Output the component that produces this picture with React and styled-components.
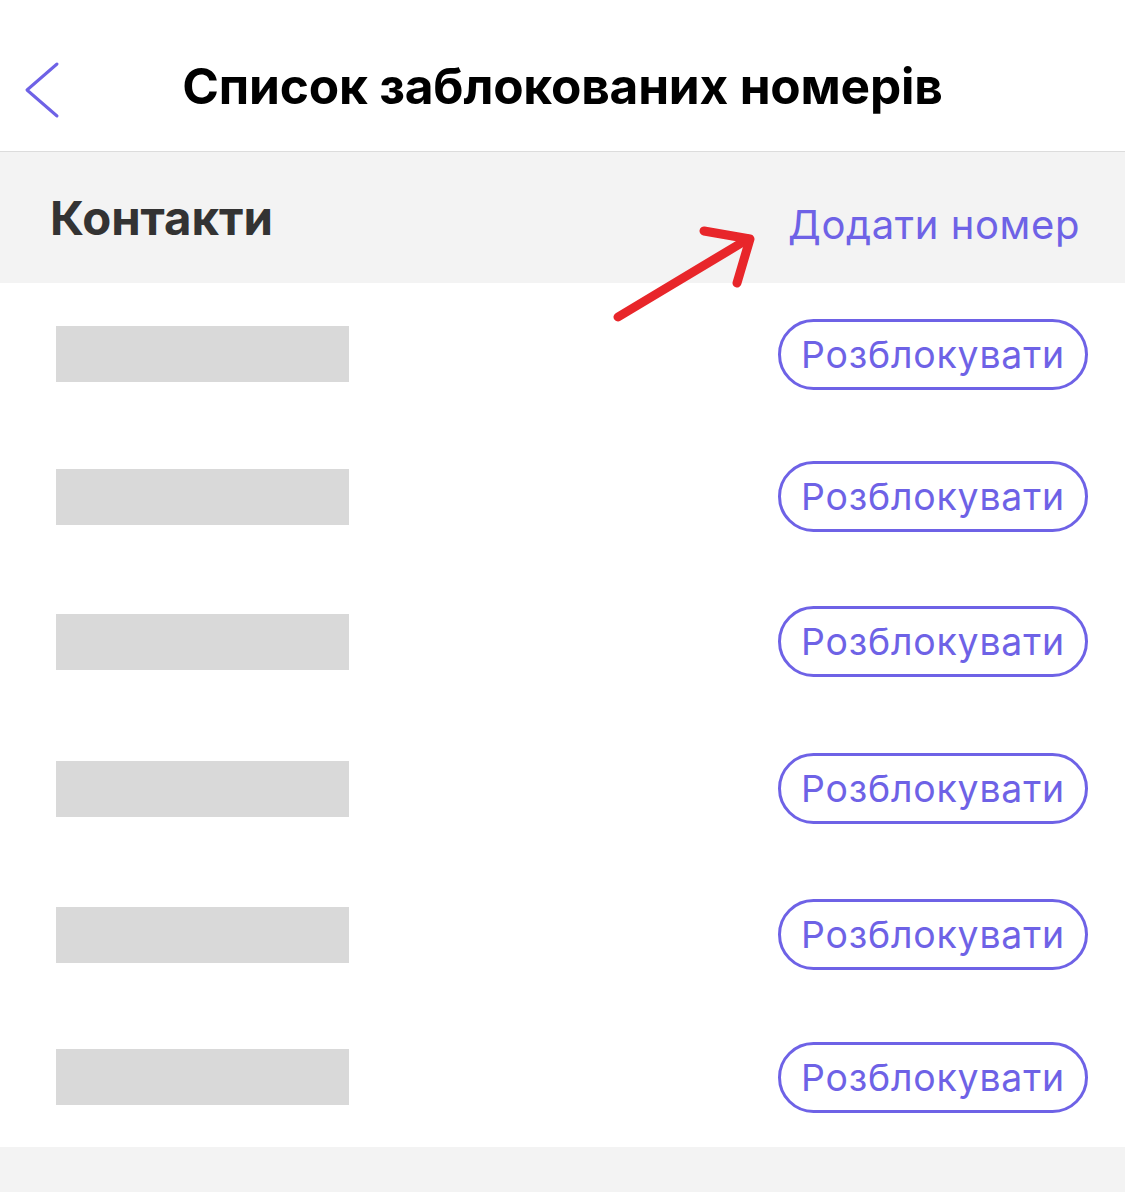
import React from 'react'
import styled, { createGlobalStyle } from 'styled-components'

const GlobalStyle = createGlobalStyle`
  html, body {
    margin: 0;
    padding: 0;
    background: #ffffff;
  }
  body {
    font-family: Inter, "Noto Sans", sans-serif;
    -webkit-font-smoothing: antialiased;
  }
`

const PURPLE = '#6e62e6'

const Page = styled.div`
  position: relative;
  width: 1125px;
  min-height: 1192px;
  background: #f3f3f3;
  overflow: hidden;
`

const TopBar = styled.header`
  height: 151px;
  background: #ffffff;
  border-bottom: 1px solid #dcdcdc;
  display: flex;
  align-items: center;
  justify-content: center;
  position: relative;
`

const BackButton = styled.button`
  position: absolute;
  left: 22px;
  top: 60px;
  width: 40px;
  height: 60px;
  padding: 0;
  border: none;
  background: transparent;
  cursor: pointer;
`

const Title = styled.h1`
  margin: 20px 0 0;
  font-size: 49.6px;
  font-weight: 700;
  color: #000000;
  letter-spacing: -0.2px;
`

const SectionHead = styled.div`
  height: 131px;
  display: flex;
  align-items: flex-start;
  justify-content: space-between;
  padding: 0 45px 0 50px;
  background: #f3f3f3;
`

const SectionTitle = styled.h2`
  margin: 37px 0 0;
  font-size: 47.3px;
  font-weight: 700;
  color: #333333;
`

const AddLink = styled.a`
  margin-top: 48px;
  font-size: 40px;
  font-weight: 400;
  color: ${PURPLE};
  text-decoration: none;
  letter-spacing: 0.6px;
`

const List = styled.ul`
  margin: 0;
  padding: 0;
  list-style: none;
  background: #ffffff;
`

const Row = styled.li`
  height: ${p => p.$h}px;
  display: flex;
  align-items: center;
  justify-content: space-between;
  padding: 0 37px 0 56px;
`

const Placeholder = styled.div`
  width: 293px;
  height: 56px;
  background: #d9d9d9;
`

const UnblockButton = styled.button`
  width: 310px;
  height: 71px;
  box-sizing: border-box;
  border: 3px solid ${PURPLE};
  border-radius: 36px;
  background: #ffffff;
  color: ${PURPLE};
  font-family: inherit;
  font-size: 37.4px;
  font-weight: 400;
  letter-spacing: 0.8px;
  padding: 0;
  cursor: pointer;
`

const Arrow = styled.svg`
  position: absolute;
  left: 610px;
  top: 225px;
  pointer-events: none;
`

const rows = [142, 143, 147, 147, 145, 140]

export default function App() {
  return (
    <Page>
      <GlobalStyle />
      <TopBar>
        <BackButton aria-label="Назад">
          <svg width="40" height="60" viewBox="0 0 40 60">
            <polyline points="35,4 5,30 35,56" fill="none" stroke={PURPLE} strokeWidth="3" strokeLinecap="round" strokeLinejoin="round" />
          </svg>
        </BackButton>
        <Title>Список заблокованих номерів</Title>
      </TopBar>
      <SectionHead>
        <SectionTitle>Контакти</SectionTitle>
        <AddLink href="#">Додати номер</AddLink>
      </SectionHead>
      <List>
        {rows.map((h, i) => (
          <Row key={i} $h={h}>
            <Placeholder />
            <UnblockButton>Розблокувати</UnblockButton>
          </Row>
        ))}
      </List>
      <Arrow width="160" height="110" viewBox="0 0 160 110">
        <g fill="none" stroke="#e8262a" strokeWidth="9" strokeLinecap="round" strokeLinejoin="round">
          <line x1="8" y1="92" x2="138" y2="14" />
          <polyline points="94,6 140,14 127,58" />
        </g>
      </Arrow>
    </Page>
  )
}
